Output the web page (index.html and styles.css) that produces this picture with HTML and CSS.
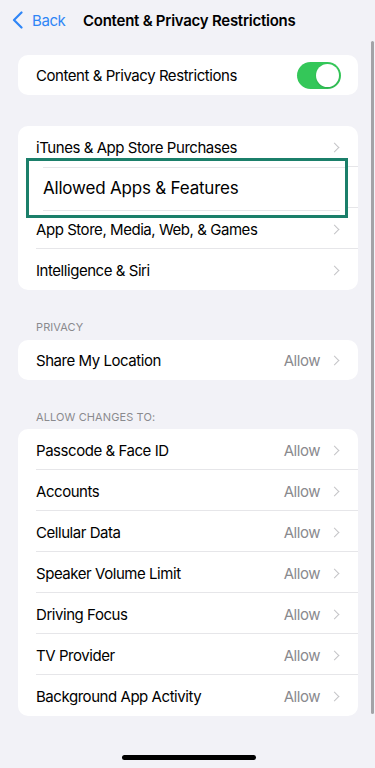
FILE: index.html
```html
<!DOCTYPE html>
<html>
<head>
<meta charset="utf-8">
<link rel="stylesheet" href="styles.css">
</head>
<body>
<div class="screen">
  <div class="nav">
    <div class="back">
      <svg class="back-chev" width="11" height="18" viewBox="0 0 11 18"><path d="M9.5 1.5 L2 9 L9.5 16.5" fill="none" stroke="#2f86f6" stroke-width="2.2" stroke-linecap="round" stroke-linejoin="round"/></svg>
      <span class="back-text">Back</span>
    </div>
    <div class="title">Content &amp; Privacy Restrictions</div>
  </div>

  <div class="card card-first">
    <div class="row row-40 last">
      <span class="label">Content &amp; Privacy Restrictions</span>
      <span class="toggle"><span class="knob"></span></span>
    </div>
  </div>

  <div class="card">
    <div class="row"><span class="label">iTunes &amp; App Store Purchases</span><span class="chev"></span></div>
    <div class="row row-hl">
      <span class="label"></span><span class="chev"></span>
      <div class="highlight">
        <span class="hl-line hl-top"></span>
        <span class="hl-text">Allowed Apps &amp; Features</span>
        <span class="hl-line hl-bottom"></span>
      </div>
    </div>
    <div class="row"><span class="label">App Store, Media, Web, &amp; Games</span><span class="chev"></span></div>
    <div class="row last"><span class="label">Intelligence &amp; Siri</span><span class="chev"></span></div>
  </div>

  <div class="section-label">PRIVACY</div>
  <div class="card">
    <div class="row row-40 last"><span class="label">Share My Location</span><span class="value">Allow</span><span class="chev"></span></div>
  </div>

  <div class="section-label section-changes">ALLOW CHANGES TO:</div>
  <div class="card">
    <div class="row"><span class="label">Passcode &amp; Face ID</span><span class="value">Allow</span><span class="chev"></span></div>
    <div class="row"><span class="label">Accounts</span><span class="value">Allow</span><span class="chev"></span></div>
    <div class="row"><span class="label">Cellular Data</span><span class="value">Allow</span><span class="chev"></span></div>
    <div class="row"><span class="label">Speaker Volume Limit</span><span class="value">Allow</span><span class="chev"></span></div>
    <div class="row"><span class="label">Driving Focus</span><span class="value">Allow</span><span class="chev"></span></div>
    <div class="row"><span class="label">TV Provider</span><span class="value">Allow</span><span class="chev"></span></div>
    <div class="row last"><span class="label">Background App Activity</span><span class="value">Allow</span><span class="chev"></span></div>
  </div>

  <div class="scrollbar"></div>
  <div class="home-indicator"></div>
</div>
</body>
</html>
```

FILE: styles.css
```css
* { box-sizing: border-box; }
html, body {
  margin: 0;
  padding: 0;
  background: #f2f2f7;
}
body {
  font-family: Inter, "Noto Sans", "Liberation Sans", sans-serif;
  color: #000;
  -webkit-font-smoothing: antialiased;
}
.screen {
  position: relative;
  width: 375px;
  height: 768px;
  overflow: hidden;
  background: #f2f2f7;
  display: flex;
  flex-direction: column;
  padding: 0 17px 0 18px;
}
.nav {
  height: 40px;
  display: flex;
  align-items: center;
  margin: 0 0 15px -6px;
}
.back {
  display: flex;
  align-items: center;
  width: 71px;
}
.back-chev { display: block; }
.back-text {
  margin-left: 9px;
  font-size: 15px;
  color: #2f86f6;
  letter-spacing: -0.4px;
}
.title {
  font-size: 15px;
  font-weight: 600;
  letter-spacing: -0.25px;
}
.card {
  position: relative;
  background: #fff;
  border-radius: 10px;
}
.card-first { margin-bottom: 31px; }
.row {
  height: 41px;
  display: flex;
  align-items: center;
  padding: 2px 18px 0;
  position: relative;
  font-size: 15px;
  letter-spacing: -0.45px;
}
.row::after {
  content: "";
  position: absolute;
  left: 18px;
  right: 0;
  bottom: 0;
  height: 1px;
  background: #e6e6e9;
}
.row.last::after { display: none; }
.row-40 { height: 40px; padding-top: 0; }
.label { flex: 1; }
.value {
  color: #8a8a8e;
  margin-right: 11px;
}
.chev {
  width: 7px;
  height: 7px;
  border-top: 1.6px solid #c4c4c7;
  border-right: 1.6px solid #c4c4c7;
  transform: rotate(45deg);
  margin-right: 2px;
}
.toggle {
  width: 44px;
  height: 27px;
  border-radius: 14px;
  background: #34c759;
  position: relative;
  margin-right: -1px;
}
.knob {
  position: absolute;
  top: 2px;
  right: 2px;
  width: 23px;
  height: 23px;
  border-radius: 50%;
  background: #fff;
  box-shadow: 0 1px 2px rgba(0,0,0,0.15);
}
.highlight {
  position: absolute;
  left: 8px;
  top: -9px;
  width: 322px;
  height: 60px;
  background: #fff;
  border: 3px solid #1b7f6a;
  display: flex;
  align-items: center;
  padding-left: 14px;
  z-index: 2;
}
.hl-text {
  font-size: 17px;
  letter-spacing: -0.2px;
}
.hl-line {
  position: absolute;
  left: 14px;
  right: 0;
  height: 1px;
  background: #e6e6e9;
}
.hl-top { top: 6px; }
.hl-bottom { bottom: 4px; right: 5px; }
.section-label {
  font-size: 11px;
  color: #8a8a8e;
  padding: 0 0 6px 18px;
  letter-spacing: 0.1px;
  height: 50px;
  display: flex;
  align-items: flex-end;
}
.section-changes {
  height: 49px;
  padding-bottom: 5px;
}
.scrollbar {
  position: absolute;
  left: 371px;
  top: 41px;
  width: 2.5px;
  height: 673px;
  border-radius: 2px;
  background: #a3a3a7;
}
.home-indicator {
  position: absolute;
  left: 122px;
  top: 755px;
  width: 134px;
  height: 5px;
  border-radius: 3px;
  background: #000;
}
```
